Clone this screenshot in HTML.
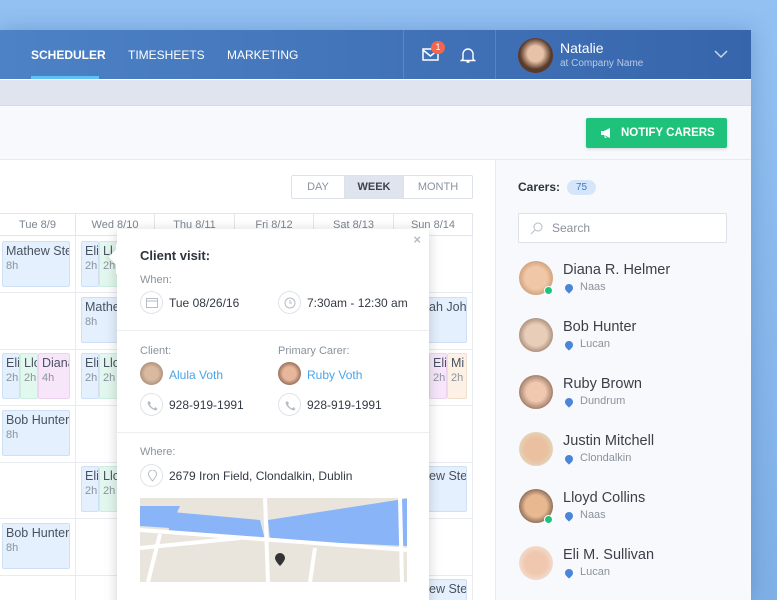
<!DOCTYPE html>
<html><head><meta charset="utf-8"><style>
*{margin:0;padding:0;box-sizing:border-box}
body{width:777px;height:600px;overflow:hidden;background:linear-gradient(180deg,#93c1f2,#7fb0e6);font-family:"Liberation Sans",sans-serif;position:relative}
.app{position:absolute;left:0;top:30px;width:751px;height:570px;background:#fff;box-shadow:0 0 20px rgba(40,80,140,.3);overflow:hidden}
.hdr{position:absolute;left:0;top:0;width:751px;height:49px;background:linear-gradient(90deg,#4d82c6,#3765ab)}
.nav{position:absolute;top:18px;color:#fff;font-size:12px;font-weight:bold;letter-spacing:0}
.sub{position:absolute;top:50px;left:0;width:751px;height:26px;background:#e0e4ee;border-bottom:1px solid #d5dae5}
.tb{position:absolute;top:76px;left:0;width:751px;height:54px;background:#f7f9fc;border-bottom:1px solid #e6e9f0}
.btn{position:absolute;left:586px;top:88px;width:141px;height:30px;background:#1ec27a;border-radius:2px;color:#fff;font-size:11.5px;font-weight:bold;line-height:30px;padding-left:35px;box-shadow:0 1px 3px rgba(0,0,0,.15)}
.side{position:absolute;left:495px;top:130px;width:256px;height:440px;background:#f8f9fc;border-left:1px solid #e6e9f0}
.tog{position:absolute;left:291px;top:145px;width:182px;height:24px;border:1px solid #dde1e8;border-radius:2px;font-size:11px;color:#8a93a0;background:#fff}
.tog span{position:absolute;top:0;height:22px;line-height:22px;text-align:center}
.th{position:absolute;top:183px;height:23px;font-size:11px;color:#7b8490;text-align:center;line-height:23px;border-right:1px solid #e3e6ec;border-bottom:1px solid #e3e6ec;border-top:1px solid #e3e6ec}
.hl{position:absolute;left:0;width:473px;height:1px;background:#e8ebf0}
.vl{position:absolute;top:206px;width:1px;height:364px;background:#e8ebf0}
.ev{position:absolute;border:1px solid #cfe0f5;border-radius:2px;background:#e4f0fd;font-size:12.5px;color:#4a5260;padding:2px 3px;line-height:15px;overflow:hidden;white-space:nowrap}
.ev i{font-style:normal;color:#8a939e;font-size:11px;display:block}
.g{background:#e2f7ee;border-color:#cdeedd}.p{background:#f7e6fa;border-color:#ebd3f0}.o{background:#fdf1e6;border-color:#f1dfcd}
.pop{position:absolute;left:117px;top:199px;width:312px;height:380px;background:#fff;box-shadow:0 2px 12px rgba(0,0,0,.18)}
.lbl{position:absolute;font-size:11px;color:#8a929c}
.txt{position:absolute;font-size:12px;color:#333a44}
.ic{position:absolute;width:23px;height:23px;border:1px solid #dfe3e9;border-radius:50%;background:#fff}
.av{position:absolute;border-radius:50%}
.nm{position:absolute;left:67px;font-size:14.5px;color:#3a3f48}
.loc{position:absolute;left:84px;font-size:11px;color:#8a929c}
.pin{position:absolute;left:69px;width:8px;height:8px;border-radius:50% 50% 50% 0;transform:rotate(-45deg);background:#4a86d8}
.dot{position:absolute;width:9px;height:9px;border-radius:50%;background:#1ec27a;border:1.5px solid #fff}
</style></head><body>
<div class="app">
<div class="hdr">
 <div class="nav" style="left:31px">SCHEDULER</div>
 <div style="position:absolute;left:31px;top:46px;width:68px;height:3px;background:#5ec0f5"></div>
 <div class="nav" style="left:128px;font-weight:normal">TIMESHEETS</div>
 <div class="nav" style="left:227px;font-weight:normal">MARKETING</div>
 <div style="position:absolute;left:403px;top:0;width:1px;height:49px;background:rgba(255,255,255,.15)"></div>
 <div style="position:absolute;left:495px;top:0;width:1px;height:49px;background:rgba(255,255,255,.15)"></div>
 <svg style="position:absolute;left:422px;top:18px" width="18" height="14" viewBox="0 0 18 14"><rect x="1" y="1" width="15" height="11" fill="none" stroke="#fff" stroke-width="1.5"/><path d="M1 2l7.5 6L16 2" fill="none" stroke="#fff" stroke-width="1.5"/></svg>
 <div style="position:absolute;left:431px;top:11px;width:14px;height:13px;border-radius:7px;background:#f0664f;color:#fff;font-size:9px;text-align:center;line-height:13px">1</div>
 <svg style="position:absolute;left:460px;top:16px" width="16" height="18" viewBox="0 0 16 18"><path d="M3 13V8a5 5 0 0110 0v5l1.5 1.5h-13z M6.5 16h3" fill="none" stroke="#fff" stroke-width="1.4"/></svg>
 <div class="av" style="left:518px;top:8px;width:35px;height:35px;background:radial-gradient(circle at 50% 45%,#e8c2a8 30%,#5a3a2a 60%)"></div>
 <div style="position:absolute;left:560px;top:10px;color:#fff;font-size:14px">Natalie</div>
 <div style="position:absolute;left:560px;top:28px;color:#b9cbe6;font-size:10px">at Company Name</div>
 <svg style="position:absolute;left:714px;top:20px" width="14" height="9"><path d="M1 1l6 6 6-6" fill="none" stroke="#c9d8ef" stroke-width="1.5"/></svg>
</div>
<div class="sub"></div>
<div class="tb"></div>
<div class="btn"><svg style="position:absolute;left:14px;top:9px" width="13" height="12" viewBox="0 0 13 12"><path d="M1 4h3l6-3v10L4 8H1z M4 8l1 3h2" fill="#fff"/></svg>NOTIFY CARERS</div>

<div class="tog"><span style="left:0;width:52px">DAY</span><span style="left:52px;width:60px;background:#e0e4ee;color:#3b4350;font-weight:bold;border-left:1px solid #dde1e8;border-right:1px solid #dde1e8">WEEK</span><span style="left:112px;width:68px">MONTH</span></div>

<div class="th" style="left:0;width:76px">Tue 8/9</div>
<div class="th" style="left:76px;width:79px">Wed 8/10</div>
<div class="th" style="left:155px;width:80px">Thu 8/11</div>
<div class="th" style="left:235px;width:79px">Fri 8/12</div>
<div class="th" style="left:314px;width:80px">Sat 8/13</div>
<div class="th" style="left:394px;width:79px">Sun 8/14</div>
<div class="hl" style="top:262px"></div><div class="hl" style="top:319px"></div><div class="hl" style="top:375px"></div><div class="hl" style="top:432px"></div><div class="hl" style="top:488px"></div><div class="hl" style="top:545px"></div>
<div class="vl" style="left:75px"></div><div class="vl" style="left:472px"></div>

<div class="ev" style="left:2px;top:211px;width:68px;height:46px">Mathew Ste<i>8h</i></div>
<div class="ev" style="left:81px;top:211px;width:18px;height:46px">Eli<i>2h</i></div>
<div class="ev g" style="left:99px;top:211px;width:20px;height:46px">Ll<i>2h</i></div>
<div class="ev" style="left:81px;top:267px;width:40px;height:46px">Mathe<i>8h</i></div>
<div class="ev" style="left:428px;top:267px;width:39px;height:46px;padding-left:0">ah John<i>&nbsp;</i></div>
<div class="ev" style="left:2px;top:323px;width:18px;height:46px">Eli<i>2h</i></div>
<div class="ev g" style="left:20px;top:323px;width:18px;height:46px">Llo<i>2h</i></div>
<div class="ev p" style="left:38px;top:323px;width:32px;height:46px">Diana<i>4h</i></div>
<div class="ev" style="left:81px;top:323px;width:18px;height:46px">Eli<i>2h</i></div>
<div class="ev g" style="left:99px;top:323px;width:20px;height:46px">Llo<i>2h</i></div>
<div class="ev p" style="left:429px;top:323px;width:18px;height:46px">Eli<i>2h</i></div>
<div class="ev o" style="left:447px;top:323px;width:20px;height:46px">Mi<i>2h</i></div>
<div class="ev" style="left:2px;top:380px;width:68px;height:46px">Bob Hunter<i>8h</i></div>
<div class="ev" style="left:81px;top:436px;width:18px;height:46px">Eli<i>2h</i></div>
<div class="ev g" style="left:99px;top:436px;width:20px;height:46px">Llo<i>2h</i></div>
<div class="ev" style="left:428px;top:436px;width:39px;height:46px;padding-left:0">ew Ste</div>
<div class="ev" style="left:2px;top:493px;width:68px;height:46px">Bob Hunter<i>8h</i></div>
<div class="ev" style="left:428px;top:549px;width:39px;height:30px;padding-left:0">ew Ste</div>

<div class="pop">
 <div style="position:absolute;left:-6px;top:22px;width:12px;height:12px;background:#fff;transform:rotate(45deg);box-shadow:-2px 2px 3px rgba(0,0,0,.08)"></div>
 <div style="position:absolute;left:-1px;top:15px;width:8px;height:30px;background:#fff"></div>
 <div style="position:absolute;right:8px;top:3px;color:#b5bcc6;font-size:13px;font-weight:bold">×</div>
 <div class="txt" style="left:23px;top:19px;font-size:13px;font-weight:bold;color:#2e343c">Client visit:</div>
 <div class="lbl" style="left:23px;top:45px">When:</div>
 <div class="ic" style="left:23px;top:62px"><svg style="position:absolute;left:5px;top:5px" width="12" height="11"><rect x=".5" y="1.5" width="11" height="9" fill="none" stroke="#b5bcc6"/><path d="M.5 4h11" stroke="#b5bcc6"/></svg></div>
 <div class="txt" style="left:52px;top:67px">Tue 08/26/16</div>
 <div class="ic" style="left:161px;top:62px"><svg style="position:absolute;left:5px;top:5px" width="12" height="12"><circle cx="6" cy="6" r="5" fill="none" stroke="#b5bcc6"/><path d="M6 3v3h2" fill="none" stroke="#b5bcc6"/></svg></div>
 <div class="txt" style="left:190px;top:67px">7:30am - 12:30 am</div>
 <div style="position:absolute;left:0;top:101px;width:312px;height:1px;background:#eceef2"></div>
 <div class="lbl" style="left:23px;top:116px">Client:</div>
 <div class="lbl" style="left:161px;top:116px">Primary Carer:</div>
 <div class="av" style="left:23px;top:133px;width:23px;height:23px;background:radial-gradient(circle,#d9b9a0 40%,#8a6e5e)"></div>
 <div class="txt" style="left:52px;top:139px;color:#4aa5e8">Alula Voth</div>
 <div class="av" style="left:161px;top:133px;width:23px;height:23px;background:radial-gradient(circle,#e8b69a 40%,#4a2e20)"></div>
 <div class="txt" style="left:190px;top:139px;color:#4aa5e8">Ruby Voth</div>
 <div class="ic" style="left:23px;top:164px"><svg style="position:absolute;left:6px;top:6px" width="11" height="11"><path d="M2 1l2 2-1 1.5c1 2 2 3 4 4L8.5 7l2 2-1.5 1.5C5 10 1 6 .5 2.5z" fill="#b5bcc6"/></svg></div>
 <div class="txt" style="left:52px;top:169px">928-919-1991</div>
 <div class="ic" style="left:161px;top:164px"><svg style="position:absolute;left:6px;top:6px" width="11" height="11"><path d="M2 1l2 2-1 1.5c1 2 2 3 4 4L8.5 7l2 2-1.5 1.5C5 10 1 6 .5 2.5z" fill="#b5bcc6"/></svg></div>
 <div class="txt" style="left:190px;top:169px">928-919-1991</div>
 <div style="position:absolute;left:0;top:203px;width:312px;height:1px;background:#eceef2"></div>
 <div class="lbl" style="left:23px;top:217px">Where:</div>
 <div class="ic" style="left:23px;top:235px"><svg style="position:absolute;left:7px;top:5px" width="9" height="12"><path d="M4.5 11C1 6.5.5 5.5.5 4a4 4 0 018 0c0 1.5-.5 2.5-4 7z" fill="none" stroke="#b5bcc6"/></svg></div>
 <div class="txt" style="left:52px;top:240px">2679 Iron Field, Clondalkin, Dublin</div>
 <svg style="position:absolute;left:23px;top:269px" width="267" height="84" viewBox="0 0 267 84"><rect width="267" height="84" fill="#e9e5dc"/><path d="M0 8L40 8 30 30 0 28z" fill="#8ab4f8"/><path d="M32 14L120 22 125 42 28 36z" fill="#8ab4f8"/><path d="M128 22L270 0 267 48 130 42z" fill="#8ab4f8"/><path d="M0 32L267 52M0 50L100 40M125 0L128 84M20 36L8 84M260 0L262 84M175 50L170 84" stroke="#fff" stroke-width="4" fill="none"/><path d="M135 60a5 5 0 1110 0c0 3-5 8-5 8s-5-5-5-8z" fill="#333"/></svg>
</div>

<div class="side">
 <div style="position:absolute;left:22px;top:20px;font-size:12px;color:#2e343c;font-weight:bold">Carers:</div>
 <div style="position:absolute;left:71px;top:20px;width:29px;height:15px;border-radius:8px;background:#d5e6fb;color:#3f79c8;font-size:10px;text-align:center;line-height:15px">75</div>
 <div style="position:absolute;left:22px;top:53px;width:209px;height:30px;border:1px solid #dde1e8;border-radius:2px;background:#fff"><svg style="position:absolute;left:11px;top:8px" width="13" height="13"><circle cx="8" cy="5" r="4" fill="none" stroke="#b5bcc6"/><path d="M5 8L1 12" stroke="#b5bcc6"/></svg><span style="position:absolute;left:33px;top:7px;font-size:12px;color:#8a929c">Search</span></div>
 <div class="av" style="left:23px;top:101px;width:34px;height:34px;background:radial-gradient(circle,#f0c8a8 45%,#b07a50)"></div><div class="dot" style="left:48px;top:126px"></div>
 <div class="nm" style="top:102px">Diana R. Helmer</div><div class="pin" style="top:124px"></div><div class="loc" style="top:121px">Naas</div>
 <div class="av" style="left:23px;top:158px;width:34px;height:34px;background:radial-gradient(circle,#e8cdb8 45%,#6a5040)"></div>
 <div class="nm" style="top:159px">Bob Hunter</div><div class="pin" style="top:181px"></div><div class="loc" style="top:178px">Lucan</div>
 <div class="av" style="left:23px;top:215px;width:34px;height:34px;background:radial-gradient(circle,#f0c8b0 40%,#5a3a2a)"></div>
 <div class="nm" style="top:216px">Ruby Brown</div><div class="pin" style="top:238px"></div><div class="loc" style="top:235px">Dundrum</div>
 <div class="av" style="left:23px;top:272px;width:34px;height:34px;background:radial-gradient(circle,#eac0a0 45%,#dde8d0)"></div>
 <div class="nm" style="top:273px">Justin Mitchell</div><div class="pin" style="top:295px"></div><div class="loc" style="top:292px">Clondalkin</div>
 <div class="av" style="left:23px;top:329px;width:34px;height:34px;background:radial-gradient(circle,#e8b890 45%,#2a2020)"></div><div class="dot" style="left:48px;top:355px"></div>
 <div class="nm" style="top:330px">Lloyd Collins</div><div class="pin" style="top:352px"></div><div class="loc" style="top:349px">Naas</div>
 <div class="av" style="left:23px;top:386px;width:34px;height:34px;background:radial-gradient(circle,#f0c8b0 45%,#f4f0ec)"></div>
 <div class="nm" style="top:387px">Eli M. Sullivan</div><div class="pin" style="top:409px"></div><div class="loc" style="top:406px">Lucan</div>
</div>
</div>
</body></html>
